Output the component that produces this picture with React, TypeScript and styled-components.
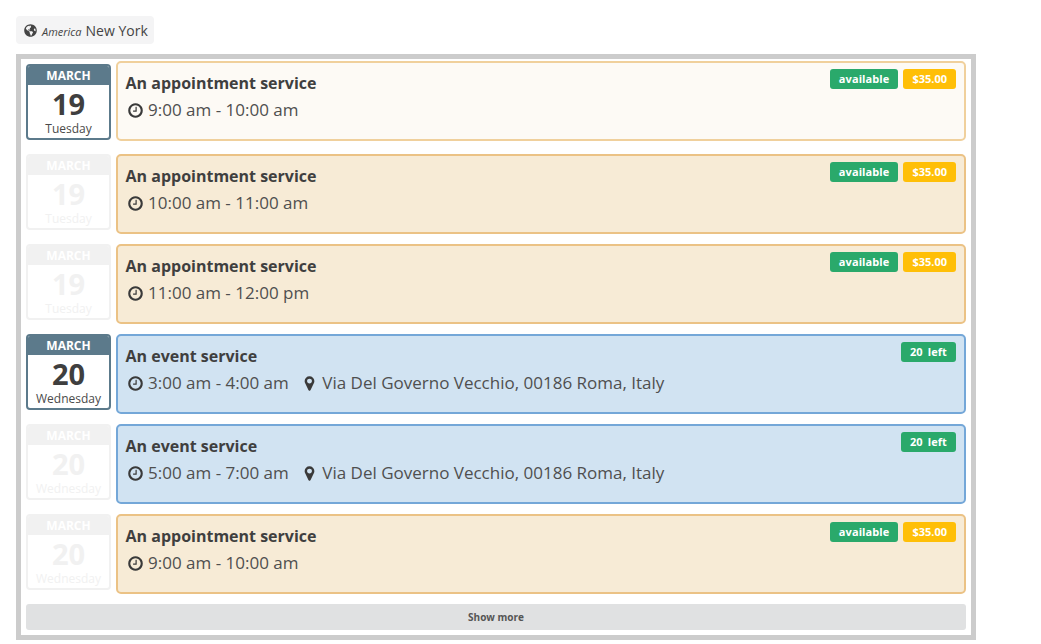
import React from "react";
import styled, { createGlobalStyle } from "styled-components";
import { FaGlobeAmericas } from "react-icons/fa";

const Global = createGlobalStyle`
  html, body { margin: 0; padding: 0; background: #fff; }
  body { font-family: "Open Sans", "Liberation Sans", sans-serif; color: #3f3f3f; }
`;

const Page = styled.div`
  width: 960px;
  padding: 16px 0 0 16px;
`;

const Zone = styled.div`
  display: inline-flex;
  align-items: center;
  height: 28px;
  padding: 0 6px 0 8px;
  background: #f4f4f5;
  border-radius: 4px;
  font-size: 14px;
  color: #444;
  margin-bottom: 10px;
  svg { width: 13px; height: 13px; margin-right: 5px; color: #444; }
`;

const Region = styled.em`
  font-size: 11px;
  margin-right: 4px;
  position: relative;
  top: 1px;
`;

const Frame = styled.div`
  border: 5px solid #cccccc;
  padding: 5px;
  box-sizing: content-box;
  width: 940px;
  display: flex;
  flex-direction: column;
  gap: 10px;
`;

const Row = styled.div`
  display: flex;
  gap: 5px;
  height: 80px;
`;

const DateBox = styled.div<{ $on: boolean }>`
  width: 85px;
  height: 76px;
  box-sizing: border-box;
  border: 2px solid ${(p) => (p.$on ? "#5c7a8b" : "#f1f1f1")};
  border-radius: 4px;
  text-align: center;
  background: #fff;
  overflow: hidden;
  flex: none;
`;

const Month = styled.div<{ $on: boolean }>`
  height: 19px;
  line-height: 19px;
  background: ${(p) => (p.$on ? "#5c7a8b" : "#f1f1f1")};
  color: #fff;
  font-size: 12px;
  font-weight: 700;
`;

const Day = styled.div<{ $on: boolean }>`
  font-size: 29px;
  font-weight: 700;
  line-height: 30px;
  margin-top: 4px;
  color: ${(p) => (p.$on ? "#3f3f3f" : "#f1f1f1")};
`;

const Weekday = styled.div<{ $on: boolean }>`
  font-size: 12px;
  line-height: 16px;
  margin-top: 2px;
  color: ${(p) => (p.$on ? "#4a4a4a" : "#f1f1f1")};
`;

const tones = {
  hover: { bg: "#fdfaf5", border: "#f0d09c" },
  appointment: { bg: "#f7ebd6", border: "#ebc285" },
  event: { bg: "#d1e3f2", border: "#74a7d8" },
};

const Card = styled.div<{ $tone: keyof typeof tones }>`
  flex: 1;
  height: 80px;
  box-sizing: border-box;
  position: relative;
  padding: 7px 7.5px;
  background: ${(p) => tones[p.$tone].bg};
  border: 2px solid ${(p) => tones[p.$tone].border};
  border-radius: 5px;
  transform: ${(p) => (p.$tone === "hover" ? "translateY(-3px)" : "none")};
`;

const Title = styled.div`
  font-size: 16px;
  font-weight: 700;
  line-height: 26px;
  color: #3f3f3f;
`;

const Meta = styled.div`
  display: flex;
  align-items: center;
  font-size: 17px;
  line-height: 28px;
  color: #4f4f4f;
  padding-left: 1px;
`;

const MetaItem = styled.span`
  display: inline-flex;
  align-items: center;
  margin-right: 12px;
`;

const Glyph = styled.svg`
  width: 17px;
  height: 17px;
  margin-right: 4.5px;
  fill: #3a3a3a;
  flex: none;
`;

const ClockIcon = () => (
  <Glyph viewBox="0 0 1792 1792">
    <path d="M1024 544v448q0 14-9 23t-23 9h-320q-14 0-23-9t-9-23v-64q0-14 9-23t23-9h224v-352q0-14 9-23t23-9h64q14 0 23 9t9 23zm416 352q0-148-73-273t-198-198-273-73-273 73-198 198-73 273 73 273 198 198 273 73 273-73 198-198 73-273zm224 0q0 209-103 385.5t-279.5 279.5-385.5 103-385.5-103-279.5-279.5-103-385.5 103-385.5 279.5-279.5 385.5-103 385.5 103 279.5 279.5 103 385.5z" />
  </Glyph>
);

const MarkerIcon = () => (
  <Glyph viewBox="0 0 1792 1792">
    <path d="M1152 640q0-106-75-181t-181-75-181 75-75 181 75 181 181 75 181-75 75-181zm256 0q0 109-33 179l-364 774q-16 33-47.5 52t-67.5 19-67.5-19-47-52l-365-774q-33-70-33-179 0-212 150-362t362-150 362 150 150 362z" />
  </Glyph>
);

const Badges = styled.div`
  position: absolute;
  top: 6px;
  right: 8px;
  display: flex;
  gap: 5px;
`;

const Badge = styled.span<{ $kind: "ok" | "price" }>`
  height: 20px;
  line-height: 20px;
  padding: 0 9px;
  border-radius: 3px;
  font-size: 11px;
  font-weight: 700;
  color: #fff;
  letter-spacing: ${(p) => (p.$kind === "ok" ? "0.1px" : "0")};
  word-spacing: ${(p) => (p.$kind === "ok" ? "2px" : "0")};
  background: ${(p) => (p.$kind === "ok" ? "#2aa96b" : "#ffbf07")};
`;

const ShowMore = styled.button`
  display: block;
  width: 100%;
  height: 26px;
  border: 0;
  border-radius: 3px;
  background: #e0e1e2;
  color: #555;
  font-family: inherit;
  font-size: 10px;
  font-weight: 700;
  padding: 0;
`;

type Item = {
  day: string;
  weekday: string;
  on: boolean;
  tone: keyof typeof tones;
  time: string;
};

const place = "Via Del Governo Vecchio, 00186 Roma, Italy";

const items: Item[] = [
  { day: "19", weekday: "Tuesday", on: true, tone: "hover", time: "9:00 am - 10:00 am" },
  { day: "19", weekday: "Tuesday", on: false, tone: "appointment", time: "10:00 am - 11:00 am" },
  { day: "19", weekday: "Tuesday", on: false, tone: "appointment", time: "11:00 am - 12:00 pm" },
  { day: "20", weekday: "Wednesday", on: true, tone: "event", time: "3:00 am - 4:00 am" },
  { day: "20", weekday: "Wednesday", on: false, tone: "event", time: "5:00 am - 7:00 am" },
  { day: "20", weekday: "Wednesday", on: false, tone: "appointment", time: "9:00 am - 10:00 am" },
];

export default function App() {
  return (
    <Page>
      <Global />
      <Zone>
        <FaGlobeAmericas />
        <Region>America</Region>
        New York
      </Zone>
      <Frame>
        {items.map((it, i) => {
          const isEvent = it.tone === "event";
          return (
            <Row key={i}>
              <DateBox $on={it.on}>
                <Month $on={it.on}>MARCH</Month>
                <Day $on={it.on}>{it.day}</Day>
                <Weekday $on={it.on}>{it.weekday}</Weekday>
              </DateBox>
              <Card $tone={it.tone}>
                <Title>{isEvent ? "An event service" : "An appointment service"}</Title>
                <Meta>
                  <MetaItem>
                    <ClockIcon />
                    {it.time}
                  </MetaItem>
                  {isEvent && (
                    <MetaItem>
                      <MarkerIcon />
                      {place}
                    </MetaItem>
                  )}
                </Meta>
                <Badges>
                  {isEvent ? (
                    <Badge $kind="ok">20 left</Badge>
                  ) : (
                    <>
                      <Badge $kind="ok">available</Badge>
                      <Badge $kind="price">$35.00</Badge>
                    </>
                  )}
                </Badges>
              </Card>
            </Row>
          );
        })}
        <ShowMore>Show more</ShowMore>
      </Frame>
    </Page>
  );
}
